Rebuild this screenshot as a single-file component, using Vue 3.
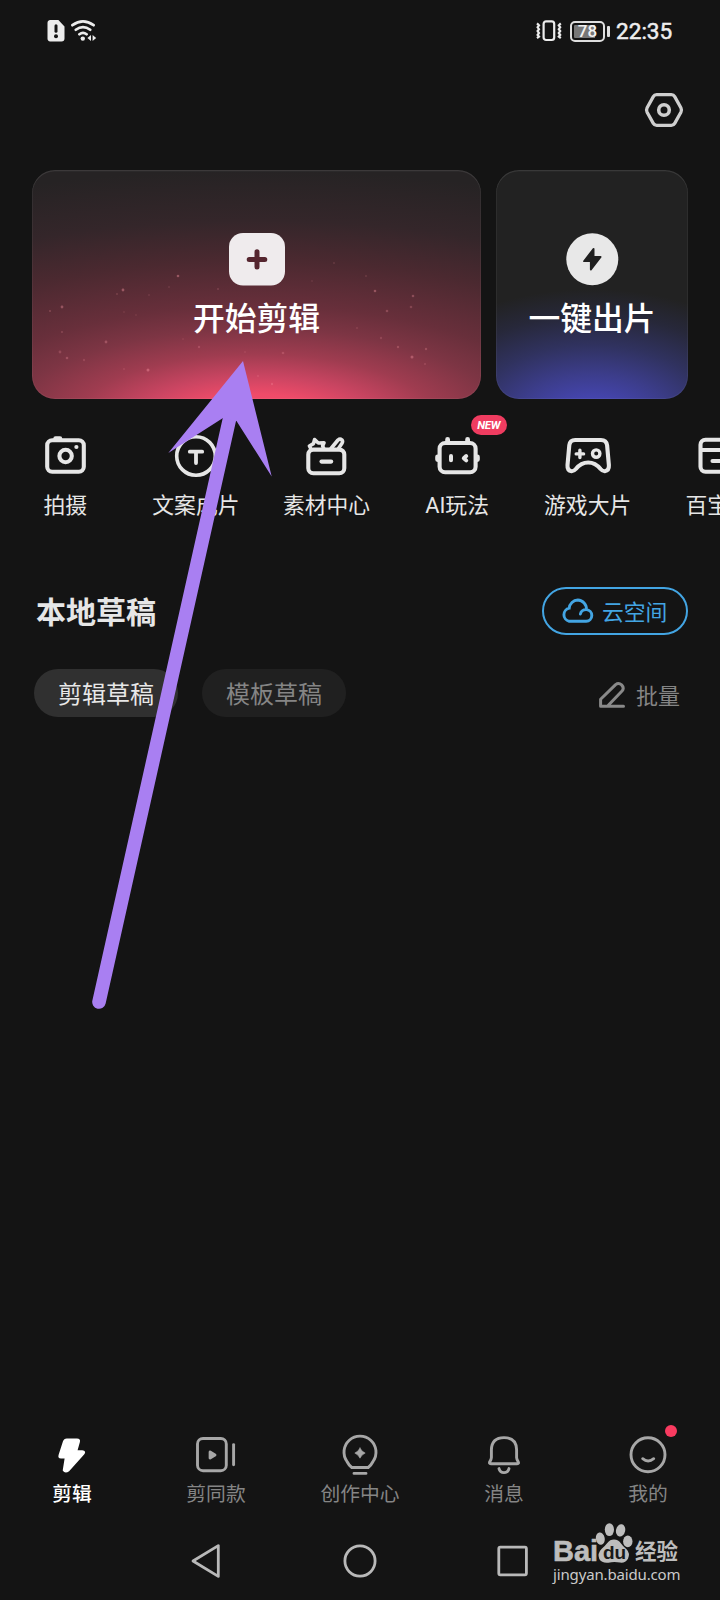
<script setup>
const stars = [
  [91, 130, 1.4, 0.4], [85, 134, 1, 0.18], [146, 116, 1.3, 0.4], [137, 127, 1, 0.12],
  [30, 147, 1.4, 0.36], [18, 151, 1, 0.25], [30, 172, 1, 0.22], [74, 182, 1.4, 0.3],
  [28, 192, 1.4, 0.22], [35, 198, 1.3, 0.28], [52, 200, 1.2, 0.18], [116, 210, 1.5, 0.4],
  [92, 209, 1, 0.15], [117, 135, 1, 0.12], [92, 152, 1, 0.1], [104, 155, 1, 0.1],
  [186, 129, 1.1, 0.18], [151, 179, 1, 0.1], [167, 187, 1.2, 0.22], [213, 192, 1, 0.12],
  [251, 193, 1.3, 0.22], [240, 224, 1.2, 0.25], [226, 216, 1, 0.18], [302, 103, 1, 0.15],
  [334, 116, 1, 0.15], [280, 121, 1, 0.1], [343, 131, 1.3, 0.36], [381, 136, 1.3, 0.3],
  [379, 147, 1.3, 0.22], [355, 151, 1.3, 0.26], [325, 168, 1, 0.15], [349, 178, 1.2, 0.18],
  [366, 187, 1.2, 0.26], [394, 189, 1.2, 0.26], [380, 197, 1.5, 0.36], [393, 204, 1.1, 0.18],
]
</script>

<template>
  <div class="screen">
    <header class="status">
      <div class="status-group">
        <svg width="18" height="22" viewBox="0 0 18 22">
          <path d="M3.2 0H11.4L17.5 6.4V18.4A3 3 0 0 1 14.5 21.4H3.2A3 3 0 0 1 .5 18.4V3A3 3 0 0 1 3.2 0Z" fill="#ececec" />
          <path d="M9 5.8V11.2" stroke="#141414" stroke-width="3" stroke-linecap="round" />
          <circle cx="9" cy="16.2" r="2" fill="#141414" />
        </svg>
        <svg width="27" height="22" viewBox="0 0 27 22" fill="none" stroke="#ececec" stroke-width="2.7" stroke-linecap="round">
          <path d="M2.4 5.2Q13-2.4 23.6 5.2M5.8 9.8Q13 4.3 20.2 9.8M9.4 14.2Q13 11.4 16.6 14.2" />
          <circle cx="12.8" cy="18.6" r="2.2" fill="#ececec" stroke="none" />
          <path d="M21 15V21L17.4 18ZM22.6 15L26.2 18L22.6 21Z" fill="#ececec" stroke="none" />
        </svg>
      </div>
      <div class="status-group right">
        <svg class="vibe" width="28" height="22" viewBox="0 0 28 22" fill="none" stroke="#ececec" stroke-width="2.2">
          <rect x="8.6" y="1.4" width="10.6" height="18.6" rx="2.5" />
          <path d="M2 3.4L4 5.3L2.6 7.3L4 9.2L2.6 11.1L4 13L2.6 15L4 16.6L2 18.2M25.8 3.4L23.8 5.3L25.2 7.3L23.8 9.2L25.2 11.1L23.8 13L25.2 15L23.8 16.6L25.8 18.2" />
        </svg>
        <div class="battery"><span>78</span></div>
        <i class="nub"></i>
        <span class="clock">22:35</span>
      </div>
    </header>

    <div class="toolbar">
      <svg width="40" height="36" viewBox="0 0 40 36" fill="none" stroke="#cfcfcf" stroke-width="3.3" stroke-linejoin="round">
        <path d="M12.6 2.7H27.4Q29.6 2.7 30.7 4.6L36.9 15.8Q38 18 36.9 20.2L30.7 31.4Q29.6 33.3 27.4 33.3H12.6Q10.4 33.3 9.3 31.4L3.1 20.2Q2 18 3.1 15.8L9.3 4.6Q10.4 2.7 12.6 2.7Z" />
        <circle cx="20" cy="18" r="5.3" stroke-width="3.6" />
      </svg>
    </div>

    <section class="cards">
      <div class="card start">
        <svg class="stars" width="449" height="229" viewBox="0 0 449 229">
          <circle v-for="(s, i) in stars" :key="i" :cx="s[0]" :cy="s[1] - 10" :r="s[2]" fill="#ff9aa8" :opacity="s[3]" />
        </svg>
        <svg class="card-icon" width="56" height="53" viewBox="0 0 56 53">
          <rect width="56" height="52.5" rx="14" fill="#efebed" />
          <path d="M28 18.7V34.1M20.2 26.4H35.8" stroke="#55252f" stroke-width="5" stroke-linecap="round" />
        </svg>
        <div class="card-title">开始剪辑</div>
      </div>
      <div class="card quick">
        <svg class="card-icon" width="53" height="53" viewBox="0 0 53 53">
          <circle cx="26.3" cy="26.3" r="26" fill="#e8e8e8" />
          <path d="M27.6 15.8L18 28.2H24.8V36.6L34.6 24H27.6Z" fill="#202020" stroke="#202020" stroke-width="1.8" stroke-linejoin="round" />
        </svg>
        <div class="card-title">一键出片</div>
      </div>
    </section>

    <section class="tools">
      <div class="tool">
        <svg width="48" height="44" viewBox="0 0 48 44" class="ic">
          <rect x="6.2" y="6.2" width="36.6" height="31.6" rx="5" />
          <path d="M14.5 4.6H19" stroke-width="4.5" /><circle cx="24.6" cy="22" r="6.2" /><circle cx="35.4" cy="13" r="2.1" class="solid" />
        </svg>
        <span>拍摄</span>
      </div>
      <div class="tool">
        <svg width="48" height="44" viewBox="0 0 48 44" class="ic">
          <circle cx="24" cy="22" r="19.3" stroke-width="3.6" /><path d="M17.8 17.7H30.2M24 18V29" stroke-width="3.8" />
        </svg>
        <span>文案成片</span>
      </div>
      <div class="tool">
        <svg width="48" height="44" viewBox="0 0 48 44" class="ic">
          <rect x="6.3" y="15.6" width="36" height="23.6" rx="5" />
          <path d="M19.5 27.6H29.2" />
          <path d="M9 15L7.4 12L11.5 9.6L12.6 5.6L16.3 9L22 8.7L20.6 12L22 15M29 14.5L36 6Q38 4.2 39.8 5.8Q41.2 7.3 40 9.3L36.5 14.5" stroke-width="3.6" />
        </svg>
        <span>素材中心</span>
      </div>
      <div class="tool">
        <svg width="48" height="44" viewBox="0 0 48 44" class="ic">
          <rect x="6.6" y="9" width="36" height="29.2" rx="5.5" />
          <path d="M14.6 8V5.4M34.6 8V5.4M4.6 22.8V25.6M44.4 22.8V25.6" stroke-width="4.8" />
          <path d="M18 22V26.2M33.2 22L30.8 24.2L33.2 26.4" stroke-width="4" />
        </svg>
        <em class="badge">NEW</em>
        <span>AI玩法</span>
      </div>
      <div class="tool">
        <svg width="48" height="44" viewBox="0 0 48 44" class="ic">
          <path d="M11.2 6H37Q42.3 6 43.1 11.2L44.9 31.2Q45.2 36.7 40.8 37.2Q38.6 37.3 36.6 35Q31.3 28.5 24.2 28.5Q17 28.5 11.8 35Q9.8 37.3 7.6 37.2Q3.1 36.7 3.5 31.2L5.3 11.2Q6 6 11.2 6Z" />
          <path d="M12.2 19.9H19.6M15.9 16.2V23.6" stroke-width="3.4" /><circle cx="32.2" cy="19.6" r="3.7" stroke-width="3.4" />
        </svg>
        <span>游戏大片</span>
      </div>
      <div class="tool">
        <svg width="48" height="44" viewBox="0 0 48 44" class="ic">
          <rect x="6.5" y="5.8" width="36" height="32" rx="5" /><path d="M7 16H42M18.5 27H30" />
        </svg>
        <span>百宝箱</span>
      </div>
    </section>

    <section class="drafts-head">
      <h1>本地草稿</h1>
      <div class="cloud">
        <svg width="34" height="28" viewBox="0 0 34 28" fill="none" stroke="#43a5e3" stroke-width="2.9" stroke-linecap="round">
          <path d="M8.2 24.3H25.2A5.9 5.9 0 0 0 30.8 18.4A5.8 5.8 0 0 0 25.4 12.6A9 9 0 0 0 16.8 3A9 9 0 0 0 8.2 11.2A6.7 6.7 0 0 0 8.2 24.3ZM25.4 12.6Q20.4 12.5 19.4 17" />
        </svg>
        <span>云空间</span>
      </div>
    </section>

    <section class="filters">
      <div class="pill on">剪辑草稿</div>
      <div class="pill">模板草稿</div>
      <div class="batch">
        <svg width="28" height="28" viewBox="0 0 28 28" fill="none" stroke="#898989" stroke-width="3" stroke-linecap="round" stroke-linejoin="round">
          <path d="M2.6 25.2V18.3L17.6 3.6Q20.6 1.4 23.6 3.9Q26.6 7 24 10L9.4 25.2M2.6 25.2H25.5" />
        </svg>
        <span>批量</span>
      </div>
    </section>

    <nav class="tabs">
      <div class="tab active">
        <svg width="44" height="44" viewBox="0 0 44 44">
          <path d="M16.8 5.6H27Q30.8 5.6 29.9 9.1L27.6 17.2H32.3Q36.9 17.9 34.1 21.6L19.1 38.2Q14.9 40.9 12.7 37.4L14.6 25.6H11Q7.4 25.2 8.7 21.4L12.9 8.6Q13.9 5.6 16.8 5.6Z" fill="#fff" />
        </svg>
        <span>剪辑</span>
      </div>
      <div class="tab">
        <svg width="44" height="44" viewBox="0 0 44 44" class="ti">
          <rect x="3.5" y="5.5" width="28.8" height="32.2" rx="5.5" /><path d="M39.6 11.6V31.8" />
          <path d="M16.1 19L21 22L16.1 25Z" fill="#a7a7a7" stroke-linejoin="round" />
        </svg>
        <span>剪同款</span>
      </div>
      <div class="tab">
        <svg width="44" height="44" viewBox="0 0 44 44" class="ti">
          <path d="M13.8 34.5H30.2Q33 32.5 35 28.5A16 16 0 1 0 9 28.5Q11 32.5 13.8 34.5ZM16 40.4H28" />
          <path d="M22 15Q23.5 18.6 27.2 20.1Q23.5 21.6 22 25.2Q20.5 21.6 16.8 20.1Q20.5 18.6 22 15Z" fill="#a7a7a7" stroke="#a7a7a7" stroke-width=".6" />
        </svg>
        <span>创作中心</span>
      </div>
      <div class="tab">
        <svg width="44" height="44" viewBox="0 0 44 44" class="ti">
          <path d="M22 4.6Q34.2 4.6 34.6 16.6V24.6Q34.8 26.6 36 28.4Q37.4 30.6 35 30.8H9Q6.6 30.6 8 28.4Q9.2 26.6 9.4 24.6V16.6Q9.8 4.6 22 4.6ZM17 35.6Q18 39.6 22 39.6T27 35.6" stroke-linejoin="round" />
        </svg>
        <span>消息</span>
      </div>
      <div class="tab">
        <svg width="44" height="44" viewBox="0 0 44 44" class="ti">
          <circle cx="22" cy="21.7" r="17" /><path d="M16.7 25.7Q22 30.2 27.7 25.7" />
        </svg>
        <i class="dot"></i>
        <span>我的</span>
      </div>
    </nav>

    <footer class="sysnav">
      <svg width="32" height="38" viewBox="0 0 32 38" class="sys back"><path d="M29.3 3.6V34.4L4 19Z" /></svg>
      <svg width="36" height="36" viewBox="0 0 36 36" class="sys home"><circle cx="18" cy="18" r="15.1" /></svg>
      <svg width="34" height="34" viewBox="0 0 34 34" class="sys recent"><rect x="2.8" y="3.2" width="27.6" height="27.6" rx="1.5" /></svg>
      <div class="watermark">
        <div class="brand">
          <b class="bai">Bai</b>
          <div class="paw">
            <svg width="39" height="42" viewBox="0 0 39 42" fill="#bdbdbd">
              <ellipse cx="5.3" cy="16.6" rx="4.4" ry="6.2" transform="rotate(-10 5.3 16.6)" />
              <ellipse cx="14.4" cy="7.6" rx="4.6" ry="6.4" />
              <ellipse cx="25.6" cy="8.4" rx="4.6" ry="6.2" transform="rotate(12 25.6 8.4)" />
              <ellipse cx="32.8" cy="19.4" rx="4.7" ry="5.9" />
              <path d="M19 17.6Q23.5 17.6 26 21.6Q28 24.6 31.5 27.2Q35.4 31 33 36.8Q30 41.5 25 40.6Q19 39.6 13.5 40.7Q7 41.5 4.3 37Q2 31.5 6.5 27Q10 24 12.3 21Q15 17.6 19 17.6Z" />
            </svg>
            <b>du</b>
          </div>
          <b class="jy">经验</b>
        </div>
        <span class="url">jingyan.baidu.com</span>
      </div>
    </footer>

    <svg class="arrow" width="720" height="1600" viewBox="0 0 720 1600">
      <path d="M99 1002L229.5 419" stroke="#a97ff2" stroke-width="13.6" stroke-linecap="round" />
      <path d="M243 361L271.7 476.5L236.5 421L223 418L168.3 453Z" fill="#a97ff2" />
    </svg>
  </div>
</template>

<style>
body { background: #141414; }
</style>

<style scoped>
.screen {
  position: relative; width: 720px; height: 1600px; overflow: hidden;
  display: flex; flex-direction: column; background: #141414; color: #e6e6e6;
  font-family: Roboto, "Noto Sans CJK SC", sans-serif; white-space: nowrap;
}
svg { display: block; flex: none; }
.status { height: 60px; flex: none; display: flex; justify-content: space-between; align-items: center; padding: 2px 48px 0 47px; box-sizing: border-box; }
.status-group { display: flex; align-items: center; gap: 5px; }
.right { gap: 0; }
.vibe { margin-right: 7px; }
.battery {
  box-sizing: border-box; width: 35px; height: 21px; border: 2px solid #dedede; border-radius: 5px;
  padding: 2px; background: linear-gradient(90deg, #777 0 21px, transparent 21px) content-box;
  display: flex; align-items: center; justify-content: center;
}
.battery span { font-size: 17px; font-weight: 500; line-height: 17px; color: #f2f2f2; }
.nub { width: 2.5px; height: 11px; background: #dedede; border-radius: 1px; margin: 0 6.5px 0 2px; }
.clock { font-size: 22.6px; font-weight: 400; -webkit-text-stroke: 0.5px #eee; line-height: 26px; color: #eee; width: 56px; padding-top: 1px; }
.toolbar { height: 110px; flex: none; display: flex; justify-content: flex-end; padding: 32px 36px 0 0; box-sizing: border-box; }
.cards { height: 229px; flex: none; display: flex; gap: 15px; padding: 0 32px; }
.card { position: relative; height: 229px; border-radius: 23px; overflow: hidden; display: flex; flex-direction: column; align-items: center; box-shadow: inset 0 0 0 1px rgba(255, 255, 255, 0.05), inset 0 1.5px 0 rgba(255, 255, 255, 0.06); }
.start {
  width: 449px;
  background: radial-gradient(ellipse 150% 110% at 50% 110%, #f74c6d 0%, #ef4b69 11%, #cb4562 18%, #9f3c50 27%, #7d3544 37%, #682f3b 46%, #4b2930 64%, #34262a 80%, #262324 100%);
}
.quick {
  width: 192px;
  background: radial-gradient(ellipse 112% 58% at 50% 110%, #4747b8 0%, #4545af 17%, #3c3d8b 36%, #30325f 58%, #27283a 80%, #222 100%);
}
.stars { position: absolute; left: 0; top: 0; }
.card-icon { margin-top: 63px; position: relative; }
.card-title { margin-top: 10px; height: 46px; line-height: 46px; font-size: 31.8px; font-weight: 500; color: #fff; position: relative; }
.tools { height: 141px; flex: none; display: flex; padding-top: 35px; box-sizing: border-box; }
.tool { position: relative; width: 130.6px; flex: none; display: flex; flex-direction: column; align-items: center; }
.tool span { font-size: 21.8px; line-height: 32px; margin-top: 12.4px; }
.ic { fill: none; stroke: #e6e6e6; stroke-width: 4.1; stroke-linecap: round; stroke-linejoin: round; }
.solid { fill: #e6e6e6; stroke: none; }
.badge { position: absolute; left: 79px; top: -19px; width: 36px; height: 20px; border-radius: 10px; background: #ef3c60; color: #fff; font: italic 700 11.5px/21px Roboto, sans-serif; letter-spacing: -0.3px; text-align: center; }
.drafts-head { height: 48px; flex: none; margin-top: 47px; padding: 0 32px 0 36px; display: flex; align-items: center; justify-content: space-between; }
h1 { margin: 0; padding-top: 3px; font-size: 30px; font-weight: 700; line-height: 44px; }
.cloud { box-sizing: border-box; width: 146px; height: 48px; border: 2px solid #43a5e3; border-radius: 24px; color: #43a5e3; display: flex; align-items: center; padding-left: 17px; gap: 7px; font-size: 21.8px; line-height: 32px; }
.cloud span { padding-top: 3px; }
.filters { height: 48px; flex: none; margin-top: 34px; padding: 0 40px 0 34px; display: flex; align-items: center; }
.pill { box-sizing: border-box; width: 144px; height: 48px; line-height: 48px; padding-top: 2px; border-radius: 24px; background: #202020; color: #858585; font-size: 24px; text-align: center; margin-right: 24px; }
.pill.on { background: #303030; color: #e8e8e8; }
.batch { margin-left: auto; display: flex; align-items: center; gap: 10px; color: #858585; font-size: 22px; line-height: 32px; padding-top: 3px; }
.batch span { padding-top: 4px; }
.tabs { height: 89px; flex: none; margin-top: auto; display: flex; }
.tab { position: relative; flex: 1; display: flex; flex-direction: column; align-items: center; color: #858585; font-size: 19.8px; }
.tab span { line-height: 28px; margin-top: 4.4px; }
.active { color: #fff; font-weight: 500; }
.ti { fill: none; stroke: #a7a7a7; stroke-width: 2.9; stroke-linecap: round; }
.dot { position: absolute; left: 89px; top: -8px; width: 12px; height: 12px; border-radius: 50%; background: #f93b60; }
.sysnav { height: 78px; flex: none; display: flex; align-items: center; padding-left: 189px; }
.sys { fill: none; stroke: #b9b9b9; stroke-width: 2.8; stroke-linejoin: round; }
.home { margin-left: 121px; }
.recent { margin-left: 118px; }
.watermark { margin: -16px 0 0 23px; color: #bdbdbd; }
.brand { display: flex; align-items: flex-end; height: 42px; }
.bai { font: 700 29px/28px "Liberation Sans", Arial, sans-serif; width: 42px; height: 27px; -webkit-text-stroke: 0.6px #bdbdbd; }
.paw { position: relative; width: 39px; }
.paw b { position: absolute; left: 8px; top: 21px; font: 700 19px/19px "Liberation Sans", Arial, sans-serif; color: #191919; }
.jy { font-size: 21.5px; line-height: 28px; height: 26px; margin-left: 1px; font-weight: 700; }
.url { display: block; font: 15px/20px "Noto Sans", sans-serif; letter-spacing: -0.15px; color: #cacaca; }
.arrow { position: absolute; left: 0; top: 0; }
</style>
